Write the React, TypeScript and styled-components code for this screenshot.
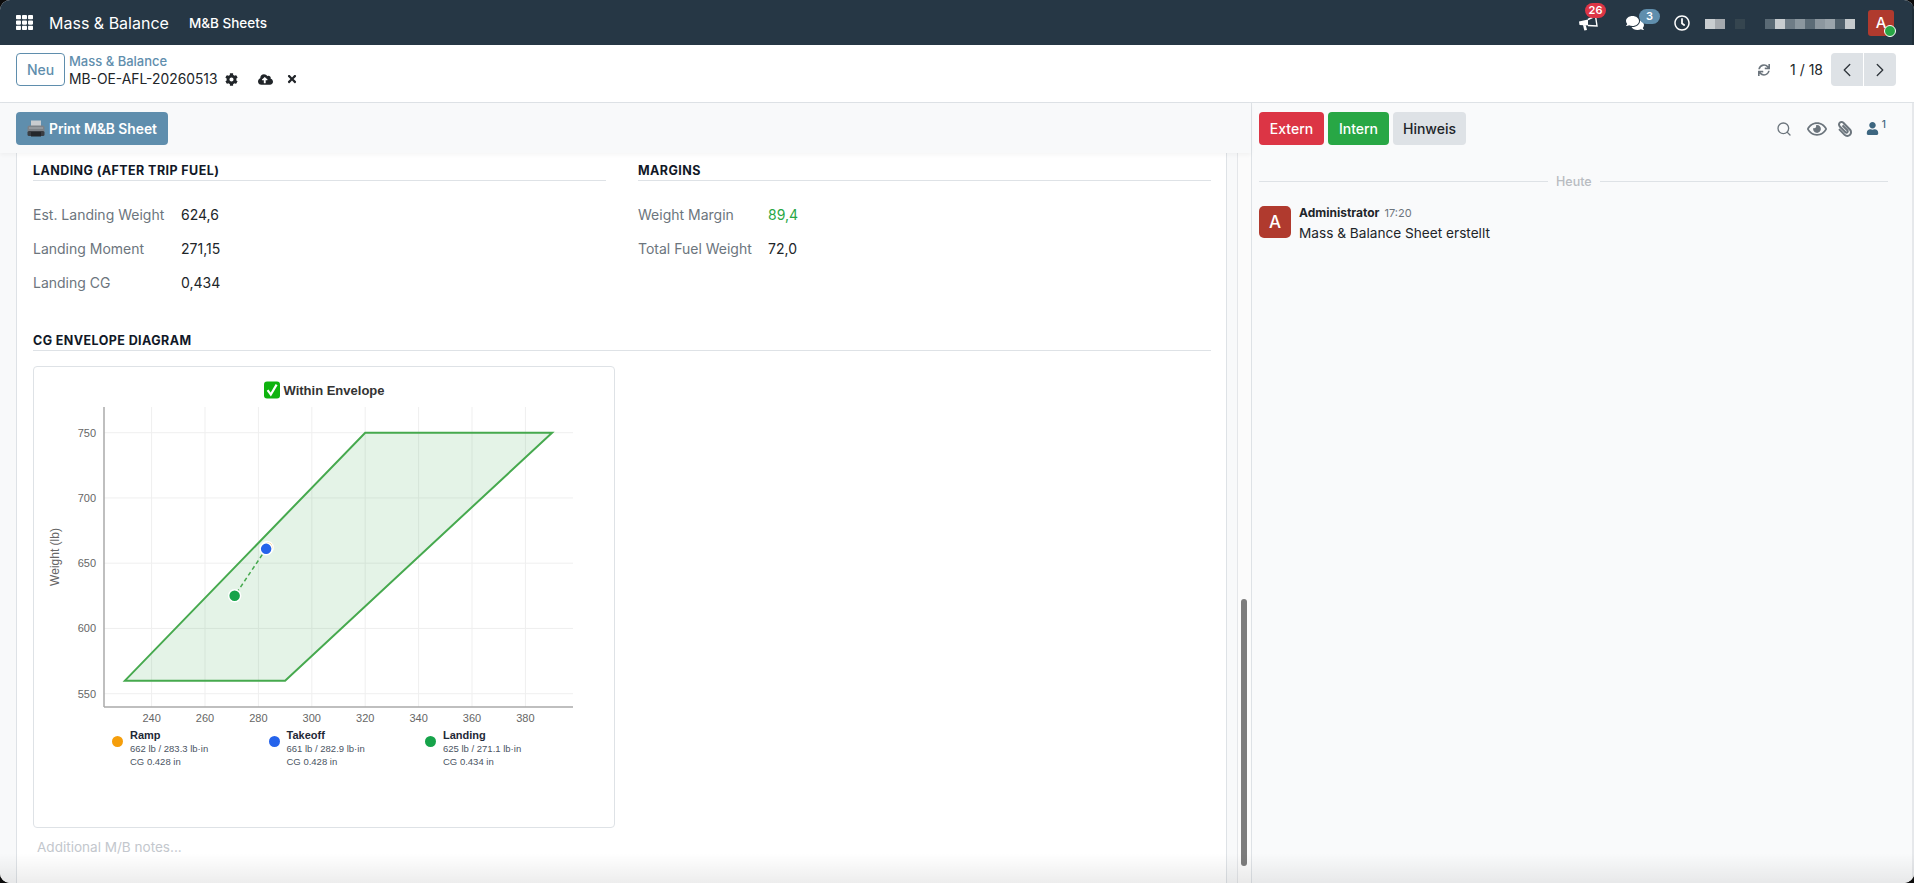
import styled, {createGlobalStyle} from "styled-components";
import {ChevronLeft, ChevronRight, Search} from "lucide-react";
import {
  FaCloudUploadAlt,
  FaCog,
  FaComments,
  FaPaperclip,
  FaRegClock,
  FaRegEye,
  FaSync,
  FaTh,
  FaTimes,
  FaUser,
} from "react-icons/fa";

const GlobalStyle = createGlobalStyle`
  html, body {
    margin: 0;
    padding: 0;
    height: 100%;
    background: #0c0c0c;
    overflow: hidden;
  }
  #root {
    height: 100%;
  }
  * {
    box-sizing: border-box;
  }
`;

const Shell = styled.div`
  height: 883px;
  display: flex;
  flex-direction: column;
  border-radius: 10px;
  overflow: hidden;
  background: #fff;
  color: #212529;
  font-family: Inter, "Noto Sans", sans-serif;
  font-size: 14px;
`;

const Navbar = styled.header`
  height: 45px;
  flex: none;
  display: flex;
  align-items: center;
  padding: 0 18px 0 16px;
  background: #263745;
  color: #fff;
  border-right: 2px solid #1f2d38;
`;

const AppName = styled.div`
  margin-left: 16px;
  font-size: 16px;
  line-height: 20px;
`;

const MenuItem = styled.div`
  margin-left: 20px;
  font-size: 13.5px;
  font-weight: 500;
`;

const Systray = styled.div`
  margin-left: auto;
  display: flex;
  align-items: center;
`;

const TrayIcon = styled.div`
  position: relative;
  width: 47px;
  display: flex;
  justify-content: center;
`;

const Badge = styled.span<{$bg: string; $left: number; $top: number}>`
  position: absolute;
  left: ${(p) => p.$left}px;
  top: ${(p) => p.$top}px;
  min-width: 21px;
  height: 15px;
  padding: 0 3px;
  border-radius: 8px;
  background: ${(p) => p.$bg};
  font-size: 11px;
  font-weight: 600;
  line-height: 15px;
  text-align: center;
`;

const PixelRow = styled.div`
  display: flex;
  height: 10px;
  margin-top: 3px;
`;

const Pixel = styled.i<{$c: string}>`
  display: block;
  width: 10px;
  height: 10px;
  background: ${(p) => p.$c};
`;

const UserAvatar = styled.div`
  position: relative;
  width: 26px;
  height: 26px;
  margin-left: 13px;
  border-radius: 3px;
  background: #b03a2e;
  font-size: 15px;
  font-weight: 500;
  line-height: 26px;
  text-align: center;
`;

const OnlineDot = styled.span`
  position: absolute;
  right: -2px;
  bottom: -1px;
  width: 12px;
  height: 12px;
  border-radius: 50%;
  background: #28a745;
  border: 1px solid #fff;
`;

const ControlPanel = styled.div`
  height: 58px;
  flex: none;
  display: flex;
  align-items: flex-start;
  padding: 8px 18px 0 16px;
  background: #fff;
  border-bottom: 1px solid #dee2e6;
`;

const NewButton = styled.button`
  width: 49px;
  height: 33px;
  padding: 0;
  border: 1px solid #5f8ead;
  border-radius: 4px;
  background: #fff;
  color: #5f8ead;
  font: 500 14px Inter, sans-serif;
`;

const Breadcrumb = styled.div`
  margin-left: 4px;
  display: flex;
  flex-direction: column;
`;

const BreadcrumbLink = styled.div`
  height: 17px;
  color: #5f8ead;
  font-size: 13px;
  font-weight: 500;
  line-height: 17px;
`;

const RecordRow = styled.div`
  display: flex;
  align-items: center;
  height: 18px;
  line-height: 18px;
  font-size: 13.85px;
  color: #212529;
`;

const RecordAction = styled.span<{$left: number}>`
  display: flex;
  margin-left: ${(p) => p.$left}px;
  color: #212529;
`;

const Pager = styled.div`
  margin-left: auto;
  height: 33px;
  display: flex;
  align-items: center;
  color: #6c757d;
`;

const PagerText = styled.span`
  margin: 0 8px 0 20px;
  color: #212529;
  font-size: 14px;
`;

const PagerButton = styled.button<{$first?: boolean}>`
  width: 32px;
  height: 33px;
  margin-left: ${(p) => (p.$first ? 0 : 1)}px;
  padding: 0;
  display: flex;
  align-items: center;
  justify-content: center;
  border: 0;
  border-radius: ${(p) => (p.$first ? "4px 0 0 4px" : "0 4px 4px 0")};
  background: #dee2e6;
  color: #343a40;
`;

const Main = styled.div`
  position: relative;
  flex: 1;
  min-height: 0;
  display: flex;
`;

const BottomFade = styled.div`
  position: absolute;
  left: 0;
  right: 0;
  bottom: 0;
  height: 30px;
  background: linear-gradient(to bottom, rgba(0, 0, 0, 0), rgba(0, 0, 0, 0.07));
  pointer-events: none;
`;

const FormPane = styled.section`
  width: 1251px;
  flex: none;
  display: flex;
  flex-direction: column;
  background: #f8f9fa;
`;

const StatusBar = styled.div`
  position: relative;
  z-index: 1;
  height: 50px;
  flex: none;
  padding: 9px 16px 0;
  background: #f8f9fa;
  box-shadow: 0 2px 4px rgba(0, 0, 0, 0.04);
`;

const PrintButton = styled.button`
  width: 152px;
  height: 33px;
  padding: 0 0 0 10px;
  display: flex;
  align-items: center;
  gap: 3px;
  border: 0;
  border-radius: 4px;
  background: #5f8ead;
  color: #fff;
  font: 600 13.8px Inter, sans-serif;
`;

const ScrollArea = styled.div`
  flex: 1;
  min-height: 0;
  display: flex;
  padding-left: 16px;
`;

const Sheet = styled.div`
  width: 1211px;
  flex: none;
  padding: 9px 15px 0 16px;
  background: #fff;
  border-left: 1px solid #dee2e6;
  border-right: 1px solid #dee2e6;
`;

const Gutter = styled.div`
  width: 10px;
  flex: none;
`;

const ScrollTrack = styled.div`
  width: 14px;
  flex: none;
  padding: 446px 4px 17px 3px;
  background: #fbfbfb;
  border-left: 1px solid #e4e6e9;
`;

const ScrollThumb = styled.div`
  height: 100%;
  border-radius: 4px;
  background: #7c7c7c;
`;

const Columns = styled.div`
  display: grid;
  grid-template-columns: 573px 573px;
  column-gap: 32px;
`;

const SectionTitle = styled.h3<{$top?: number}>`
  margin: ${(p) => p.$top ?? 0}px 0 0;
  height: 19px;
  font-size: 12.5px;
  font-weight: 700;
  line-height: 18px;
  letter-spacing: 0.42px;
  text-transform: uppercase;
  color: #111827;
  border-bottom: 1px solid #dee2e6;
`;

const Fields = styled.div`
  margin-top: 16px;
`;

const Field = styled.div<{$labelWidth: number}>`
  height: 34px;
  display: grid;
  grid-template-columns: ${(p) => p.$labelWidth}px auto;
  align-items: center;
`;

const FieldLabel = styled.span`
  color: #6c757d;
  font-size: 14px;
  font-weight: 400;
`;

const FieldValue = styled.span<{$good?: boolean}>`
  color: ${(p) => (p.$good ? "#28a745" : "#212529")};
  font-size: 14px;
`;

const ChartCard = styled.div`
  width: 582px;
  height: 462px;
  margin-top: 15px;
  padding-top: 15px;
  border: 1px solid #dee2e6;
  border-radius: 4px;
  background: #fff;
  font-family: "Liberation Sans", Arial, sans-serif;
`;

const ChartTitle = styled.div`
  height: 16px;
  margin-bottom: 1px;
  display: flex;
  justify-content: center;
  align-items: center;
  gap: 4px;
  color: #333;
  font-size: 13px;
  font-weight: 700;
`;

const ChartSvg = styled.svg`
  display: block;
  width: 579px;
  height: 328px;
`;

const Legend = styled.div`
  display: flex;
  padding: 1px 0 0 78px;
`;

const LegendItem = styled.div`
  width: 156.5px;
  display: flex;
  align-items: flex-start;
  gap: 7px;
`;

const LegendDot = styled.span<{$c: string}>`
  flex: none;
  width: 11px;
  height: 11px;
  margin-top: 8px;
  border-radius: 50%;
  background: ${(p) => p.$c};
`;

const LegendName = styled.div`
  height: 14px;
  color: #1f2937;
  font-size: 11px;
  font-weight: 700;
  line-height: 14px;
`;

const LegendLine = styled.div`
  height: 13px;
  color: #4b5563;
  font-size: 9.5px;
  line-height: 13px;
`;

const Notes = styled.div`
  margin: 9px 0 0 4px;
  height: 20px;
  color: #c3c7cd;
  font-size: 13.55px;
  line-height: 20px;
`;

const SheetEnd = styled.div`
  margin-top: 26px;
  border-top: 1px solid #dee2e6;
`;

const Chatter = styled.aside`
  flex: 1;
  min-width: 0;
  padding: 0 24px 0 7px;
  background: #f9fafb;
  border-left: 1px solid #dee2e6;
  border-right: 2px solid #e6e8eb;
`;

const ChatterBar = styled.div`
  height: 50px;
  padding-top: 9px;
  display: flex;
  align-items: flex-start;
  gap: 4px;
`;

const ChatterButton = styled.button<{$bg: string; $fg: string; $w: number}>`
  width: ${(p) => p.$w}px;
  height: 33px;
  padding: 0;
  border: 0;
  border-radius: 4px;
  background: ${(p) => p.$bg};
  color: ${(p) => p.$fg};
  font: 500 14px Inter, sans-serif;
`;

const ChatterTools = styled.div`
  margin-left: auto;
  padding-right: 2px;
  height: 33px;
  display: flex;
  align-items: center;
  color: #6c757d;
`;

const EyeIcon = styled(FaRegEye)`
  margin-left: 15px;
`;

const ClipIcon = styled(FaPaperclip)`
  margin-left: 10px;
  transform: scaleX(-1);
`;

const FollowerIcon = styled(FaUser)`
  margin-left: 13px;
  color: #3d6680;
`;

const FollowerCount = styled.sup`
  margin: -10px 0 0 3px;
  font-size: 10px;
  font-weight: 500;
  color: #3d6680;
`;

const DayDivider = styled.div`
  margin-top: 19px;
  height: 18px;
  display: flex;
  align-items: center;
  gap: 8px;
  color: #b8bcc1;
  font-size: 12.5px;
  font-weight: 500;

  &::before,
  &::after {
    content: "";
    flex: 1;
    border-top: 1px solid #dee2e6;
  }
  &::before {
    flex: 0 0 289px;
  }
`;

const Message = styled.div`
  margin-top: 16px;
  display: flex;
  gap: 8px;
`;

const MessageAvatar = styled.div`
  width: 32px;
  height: 32px;
  flex: none;
  border-radius: 5px;
  background: #b03a2e;
  color: #fff;
  font-size: 17px;
  font-weight: 500;
  line-height: 32px;
  text-align: center;
`;

const MessageHead = styled.div`
  height: 14px;
  margin-bottom: 4px;
  font-size: 12px;
  font-weight: 700;
  line-height: 14px;
`;

const MessageTime = styled.span`
  margin-left: 5px;
  color: #6c757d;
  font-size: 11px;
  font-weight: 400;
`;

const MessageText = styled.div`
  font-size: 13.65px;
  line-height: 18px;
`;

const pixels = [
  "#c8cdd0", "#a4a9ae", "transparent", "#35454f", "transparent", "transparent",
  "#5a6a75", "#c8cdd0", "#6e7c86", "#8b979f", "#5c6c77", "#8c979f", "#9aa4ab", "#4f5f6a", "#c5cacd",
];

const xTicks = [240, 260, 280, 300, 320, 340, 360, 380];
const yTicks = [550, 600, 650, 700, 750];
const sx = (v: number) => 117.6 + (v - 240) * 2.67;
const sy = (v: number) => 33.7 + (750 - v) * 1.305;

const envelope = [
  [230, 560],
  [290, 560],
  [390, 750],
  [320, 750],
];

const legend = [
  {name: "Ramp", color: "#f59e0b", line: "662 lb / 283.3 lb·in", cg: "CG 0.428 in"},
  {name: "Takeoff", color: "#2563eb", line: "661 lb / 282.9 lb·in", cg: "CG 0.428 in"},
  {name: "Landing", color: "#16a34a", line: "625 lb / 271.1 lb·in", cg: "CG 0.434 in"},
];

const BullhornIcon = () => (
  <svg width="20" height="16" viewBox="0 0 20 16">
    <path d="M1 6.5 L10 4.5 L10 10.5 L1.5 10 Z" fill="#fff" />
    <path d="M5 10 L7.8 10.2 L9 15 L6.3 15.5 Z" fill="#fff" />
    <path d="M10 4.5 L17.5 1 L19 11 L10 10.5" fill="none" stroke="#fff" strokeWidth="1.4" />
  </svg>
);

const PrinterEmoji = () => (
  <svg width="20" height="20" viewBox="0 0 20 20">
    <rect x="5" y="1.5" width="10" height="6" fill="#c9ccd0" />
    <rect x="1.5" y="6.5" width="17" height="8" rx="2" fill="#7d8288" />
    <rect x="1.5" y="12" width="17" height="5" rx="1.5" fill="#3a3d42" />
    <rect x="5" y="13" width="10" height="4.5" fill="#24272b" />
    <rect x="3" y="8.5" width="14" height="1" fill="#a9adb2" />
  </svg>
);

const CheckEmoji = () => (
  <svg width="16" height="18" viewBox="0 0 16 18">
    <rect x="0" y="0.5" width="16" height="17" rx="3" fill="#0fb30f" />
    <path d="M3.6 9.2 L6.8 13.6 L12.6 3.6" fill="none" stroke="#fff" strokeWidth="2.2" />
  </svg>
);

const Chart = () => (
  <ChartSvg viewBox="0 0 579 328">
    {xTicks.map((t) => (
      <line key={t} x1={sx(t)} x2={sx(t)} y1="8" y2="308" stroke="#efefef" />
    ))}
    {yTicks.map((t) => (
      <line key={t} x1="70" x2="539" y1={sy(t)} y2={sy(t)} stroke="#efefef" />
    ))}
    <polygon
      points={envelope.map(([x, y]) => `${sx(x)},${sy(y)}`).join(" ")}
      fill="rgba(46,160,67,0.13)"
      stroke="#46a94e"
      strokeWidth="2"
    />
    <line x1="70" x2="70" y1="8" y2="308" stroke="#aaa" strokeWidth="1.5" />
    <line x1="70" x2="539" y1="308" y2="308" stroke="#aaa" strokeWidth="1.5" />
    {xTicks.map((t) => (
      <text key={t} x={sx(t)} y="323" fontSize="11" fill="#666" textAnchor="middle">
        {t}
      </text>
    ))}
    {yTicks.map((t) => (
      <text key={t} x="62" y={sy(t) + 4} fontSize="11" fill="#666" textAnchor="end">
        {t}
      </text>
    ))}
    <text
      transform="translate(25 158) rotate(-90)"
      fontSize="12"
      fill="#666"
      textAnchor="middle"
    >
      Weight (lb)
    </text>
    <line
      x1={sx(282.9)}
      y1={sy(661)}
      x2={sx(271.1)}
      y2={sy(625)}
      stroke="#46a94e"
      strokeWidth="1.5"
      strokeDasharray="4 3"
    />
    <circle cx={sx(283.3)} cy={sy(662)} r="6" fill="#f59e0b" stroke="#fff" strokeWidth="1.5" />
    <circle cx={sx(282.9)} cy={sy(661)} r="6" fill="#2563eb" stroke="#fff" strokeWidth="1.5" />
    <circle cx={sx(271.1)} cy={sy(625)} r="6" fill="#16a34a" stroke="#fff" strokeWidth="1.5" />
  </ChartSvg>
);

export default function App() {
  return (
    <Shell>
      <GlobalStyle />
      <Navbar>
        <FaTh size={17} />
        <AppName>Mass &amp; Balance</AppName>
        <MenuItem>M&amp;B Sheets</MenuItem>
        <Systray>
          <TrayIcon>
            <BullhornIcon />
            <Badge $bg="#dc3545" $left={21} $top={-12}>26</Badge>
          </TrayIcon>
          <TrayIcon>
            <FaComments size={18} />
            <Badge $bg="#5f8ead" $left={28} $top={-5}>3</Badge>
          </TrayIcon>
          <TrayIcon>
            <FaRegClock size={16} />
          </TrayIcon>
          <PixelRow>
            {pixels.map((c, i) => (
              <Pixel key={i} $c={c} />
            ))}
          </PixelRow>
          <UserAvatar>
            A
            <OnlineDot />
          </UserAvatar>
        </Systray>
      </Navbar>

      <ControlPanel>
        <NewButton>Neu</NewButton>
        <Breadcrumb>
          <BreadcrumbLink>Mass &amp; Balance</BreadcrumbLink>
          <RecordRow>
            MB-OE-AFL-20260513
            <RecordAction $left={7}><FaCog size={13} /></RecordAction>
            <RecordAction $left={20}><FaCloudUploadAlt size={15} /></RecordAction>
            <RecordAction $left={13}><FaTimes size={12} /></RecordAction>
          </RecordRow>
        </Breadcrumb>
        <Pager>
          <FaSync size={12} />
          <PagerText>1 / 18</PagerText>
          <PagerButton $first><ChevronLeft size={22} strokeWidth={1.5} /></PagerButton>
          <PagerButton><ChevronRight size={22} strokeWidth={1.5} /></PagerButton>
        </Pager>
      </ControlPanel>

      <Main>
        <FormPane>
          <StatusBar>
            <PrintButton>
              <PrinterEmoji />
              Print M&amp;B Sheet
            </PrintButton>
          </StatusBar>
          <ScrollArea>
            <Sheet>
              <Columns>
                <div>
                  <SectionTitle>Landing (after trip fuel)</SectionTitle>
                  <Fields>
                    <Field $labelWidth={148}>
                      <FieldLabel>Est. Landing Weight</FieldLabel>
                      <FieldValue>624,6</FieldValue>
                    </Field>
                    <Field $labelWidth={148}>
                      <FieldLabel>Landing Moment</FieldLabel>
                      <FieldValue>271,15</FieldValue>
                    </Field>
                    <Field $labelWidth={148}>
                      <FieldLabel>Landing CG</FieldLabel>
                      <FieldValue>0,434</FieldValue>
                    </Field>
                  </Fields>
                </div>
                <div>
                  <SectionTitle>Margins</SectionTitle>
                  <Fields>
                    <Field $labelWidth={130}>
                      <FieldLabel>Weight Margin</FieldLabel>
                      <FieldValue $good>89,4</FieldValue>
                    </Field>
                    <Field $labelWidth={130}>
                      <FieldLabel>Total Fuel Weight</FieldLabel>
                      <FieldValue>72,0</FieldValue>
                    </Field>
                  </Fields>
                </div>
              </Columns>
              <SectionTitle $top={33}>CG Envelope Diagram</SectionTitle>
              <ChartCard>
                <ChartTitle>
                  <CheckEmoji />
                  Within Envelope
                </ChartTitle>
                <Chart />
                <Legend>
                  {legend.map((item) => (
                    <LegendItem key={item.name}>
                      <LegendDot $c={item.color} />
                      <div>
                        <LegendName>{item.name}</LegendName>
                        <LegendLine>{item.line}</LegendLine>
                        <LegendLine>{item.cg}</LegendLine>
                      </div>
                    </LegendItem>
                  ))}
                </Legend>
              </ChartCard>
              <Notes>Additional M/B notes...</Notes>
              <SheetEnd />
            </Sheet>
            <Gutter />
            <ScrollTrack>
              <ScrollThumb />
            </ScrollTrack>
          </ScrollArea>
        </FormPane>

        <Chatter>
          <ChatterBar>
            <ChatterButton $bg="#dc3545" $fg="#fff" $w={65}>Extern</ChatterButton>
            <ChatterButton $bg="#28a745" $fg="#fff" $w={61}>Intern</ChatterButton>
            <ChatterButton $bg="#dee2e6" $fg="#212529" $w={73}>Hinweis</ChatterButton>
            <ChatterTools>
              <Search size={16} strokeWidth={2} />
              <EyeIcon size={20} />
              <ClipIcon size={16} />
              <FollowerIcon size={13} />
              <FollowerCount>1</FollowerCount>
            </ChatterTools>
          </ChatterBar>
          <DayDivider>Heute</DayDivider>
          <Message>
            <MessageAvatar>A</MessageAvatar>
            <div>
              <MessageHead>
                Administrator
                <MessageTime>17:20</MessageTime>
              </MessageHead>
              <MessageText>Mass &amp; Balance Sheet erstellt</MessageText>
            </div>
          </Message>
        </Chatter>
        <BottomFade />
      </Main>
    </Shell>
  );
}
